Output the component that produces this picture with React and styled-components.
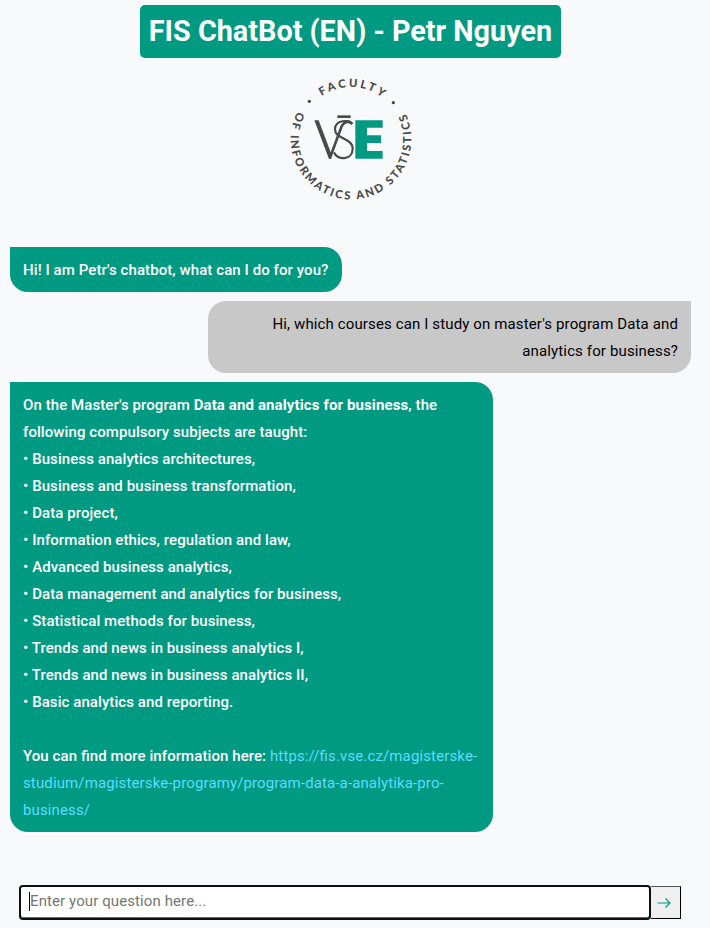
import React from "react";
import styled, { createGlobalStyle } from "styled-components";

const GlobalStyle = createGlobalStyle`
  * { box-sizing: border-box; }
  body {
    margin: 0;
    background: #f8f9fb;
    font-family: Roboto, sans-serif;
    font-size: 15px;
    line-height: 27px;
    letter-spacing: 0.1px;
    font-feature-settings: "liga" 1;
    color: #000;
  }
`;

const Page = styled.main`
  display: flex;
  flex-direction: column;
  height: 928px;
  padding-top: 5px;
  overflow: hidden;
`;

const Header = styled.header`
  display: flex;
  flex-direction: column;
  flex-shrink: 0;
  align-items: center;
  width: 701px;
  height: 242px;
`;

const Title = styled.h1`
  margin: 0;
  width: 421px;
  height: 53px;
  border-radius: 5px;
  background: #009982;
  color: #fff;
  font-size: 28.8px;
  font-weight: 700;
  line-height: 53px;
  letter-spacing: 0;
  text-align: center;
  white-space: nowrap;
`;

const Logo = styled.svg`
  width: 142px;
  height: 140px;
  margin-top: 12px;
`;

const RingText = styled.text`
  font-family: Lato, sans-serif;
  font-size: 34px;
  font-weight: 900;
  letter-spacing: ${(p) => p.$spacing}px;
  fill: #4a4a48;
`;

const Chat = styled.section`
  display: flex;
  flex-direction: column;
  flex-shrink: 0;
  gap: 9px;
  width: 701px;
  padding: 0 10px;
`;

const Bubble = styled.div`
  align-self: ${(p) => (p.$user ? "flex-end" : "flex-start")};
  width: ${(p) => p.$width}px;
  padding: 10px 13px 8px;
  border-radius: ${(p) => (p.$user ? "18px 0 18px 18px" : "0 18px 18px 18px")};
  background: ${(p) => (p.$user ? "#c8c8c8" : "#009982")};
  color: ${(p) => (p.$user ? "#000" : "#fff")};
  font-weight: ${(p) => (p.$user ? 400 : 500)};
  letter-spacing: ${(p) => (p.$user ? "0.13px" : "0.08px")};
  text-align: ${(p) => (p.$user ? "right" : "left")};
  white-space: ${(p) => (p.$oneLine ? "nowrap" : "normal")};
`;

const Paragraph = styled.p`
  margin: 0;
`;

const Strong = styled.b`
  font-weight: 700;
  letter-spacing: 0.12px;
`;

const List = styled.ul`
  margin: 0 0 27px;
  padding: 0;
  list-style: none;
`;

const Link = styled.a`
  color: #5bdcff;
  font-weight: 400;
  letter-spacing: 0.13px;
  text-decoration: none;
`;

const Composer = styled.form`
  display: flex;
  align-items: center;
  margin: 53px 0 0 19px;
`;

const Field = styled.div`
  display: flex;
  align-items: center;
  width: 632px;
  height: 35px;
  padding: 0 8px;
  border: 2px solid #101010;
  border-radius: 4px;
  background: #fff;
  box-shadow: inset 0 -1px #009982;
`;

const Caret = styled.span`
  width: 1px;
  height: 19px;
  margin-top: -2px;
  background: #000;
`;

const Input = styled.input`
  flex: 1;
  padding: 0;
  border: 0;
  outline: 0;
  background: transparent;
  font: 400 15px/20px Roboto, sans-serif;
  letter-spacing: 0.1px;
  margin-top: -4px;
  &::placeholder { color: #757575; opacity: 1; }
`;

const Send = styled.button`
  display: flex;
  align-items: center;
  justify-content: center;
  width: 30px;
  height: 33px;
  padding: 0 3px 0 0;
  border: 1px solid #000;
  border-top-color: #555;
  border-left: 0;
  background: #efefef;
`;

const subjects = [
  "Business analytics architectures,",
  "Business and business transformation,",
  "Data project,",
  "Information ethics, regulation and law,",
  "Advanced business analytics,",
  "Data management and analytics for business,",
  "Statistical methods for business,",
  "Trends and news in business analytics I,",
  "Trends and news in business analytics II,",
  "Basic analytics and reporting.",
];

function FacultyLogo() {
  return (
    <Logo viewBox="0 0 426 420">
      <defs>
        <path id="ring-top" d="M57 207 A156 156 0 0 1 369 207" />
        <path id="ring-bottom" d="M52 125 A181 181 0 1 0 361 103" />
      </defs>
      <RingText $spacing={8} textAnchor="middle">
        <textPath href="#ring-top" startOffset="51.5%">FACULTY</textPath>
      </RingText>
      <RingText $spacing={2} textLength="735">
        <textPath href="#ring-bottom" textLength="735">OF INFORMATICS AND STATISTICS</textPath>
      </RingText>
      <circle cx="88" cy="94" r="5" fill="#4a4a48" />
      <circle cx="340" cy="98" r="5" fill="#4a4a48" />
      <path d="M103 151H116L152 247L181 168Q189 153 205 151Q214 151 219 160L214 164Q198 153 188 172L153 267H147Z" fill="#4a4a48" />
      <path d="M172 136H212V144H172Z" fill="#4a4a48" />
      <path d="M217 162C207 148 166 149 165 177C164 208 218 203 218 236C218 272 171 272 162 247" fill="none" stroke="#4a4a48" strokeWidth="6.5" />
      <path d="M226 151H308V173H261V196H303V219H261V243H308V266H226Z" fill="#009982" />
    </Logo>
  );
}

export default function App() {
  return (
    <Page>
      <GlobalStyle />
      <Header>
        <Title>FIS ChatBot (EN) - Petr Nguyen</Title>
        <FacultyLogo />
      </Header>
      <Chat>
        <Bubble $width={332} $oneLine>Hi! I am Petr's chatbot, what can I do for you?</Bubble>
        <Bubble $user $width={483}>
          Hi, which courses can I study on master's program Data and analytics for business?
        </Bubble>
        <Bubble $width={483}>
          <Paragraph>
            On the Master's program <Strong>Data and analytics for business</Strong>, the following compulsory subjects are taught:
          </Paragraph>
          <List>
            {subjects.map((s) => <li key={s}>• {s}</li>)}
          </List>
          <Paragraph>
            You can find more information here:{" "}
            <Link href="#">https://fis.vse.cz/magisterske-studium/magisterske-programy/program-data-a-analytika-pro-business/</Link>
          </Paragraph>
        </Bubble>
      </Chat>
      <Composer>
        <Field>
          <Caret />
          <Input placeholder="Enter your question here..." />
        </Field>
        <Send type="button" aria-label="Send">
          <svg width="16" height="16" viewBox="0 0 16 16" fill="none" stroke="#009982" strokeWidth="1.2">
            <path d="M1.5 8H14M9.5 3.5L14 8L9.5 12.5" />
          </svg>
        </Send>
      </Composer>
    </Page>
  );
}
